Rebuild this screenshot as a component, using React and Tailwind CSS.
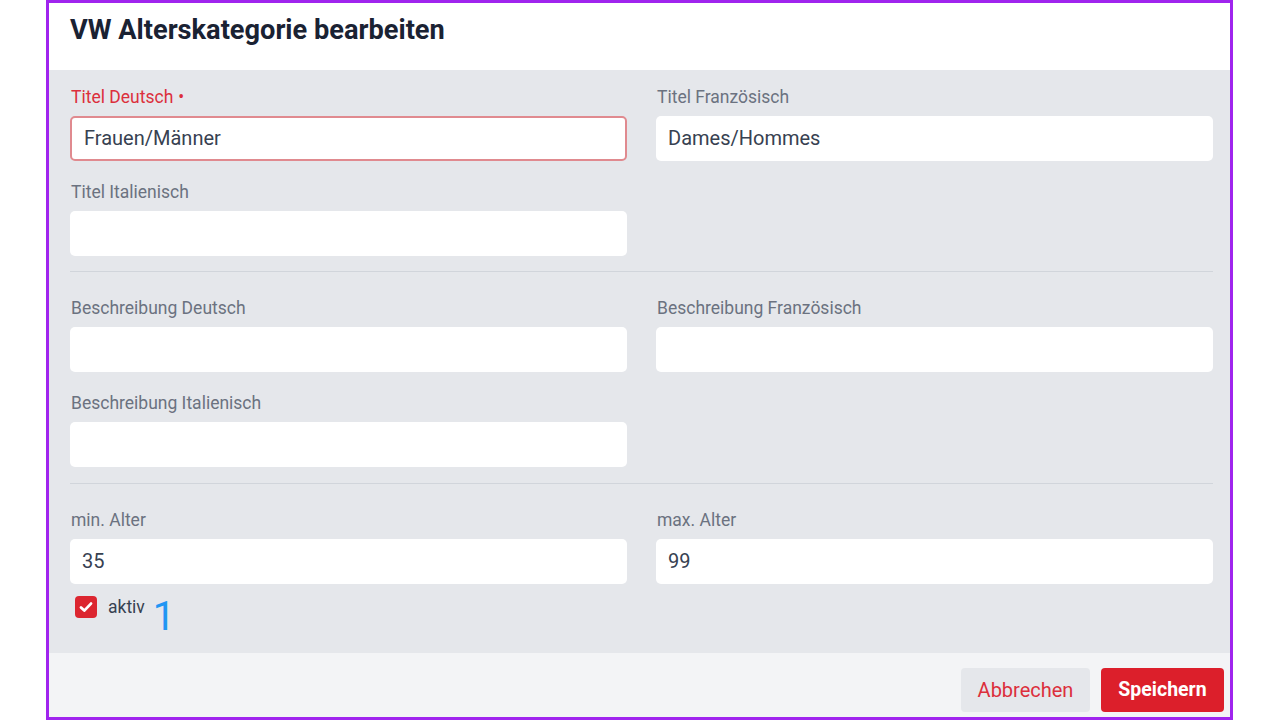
import React from "react";

const font = { fontFamily: "Roboto, 'Noto Sans', sans-serif" };

function Field({ label, value = "", required = false, invalid = false }) {
  return (
    <div className="flex flex-col">
      <label
        className={`h-[24px] leading-[24px] text-[17.5px] px-[1px] ${
          required ? "text-[#dc2f3c]" : "text-[#6b7280]"
        }`}
      >
        {label}
        {required && <span className="ml-[5px]">•</span>}
      </label>
      <div
        className={`mt-[7px] h-[45px] rounded-[5px] bg-white flex items-center px-[12px] text-[20px] text-[#374151] ${
          invalid ? "border-2 border-[#e08a8f]" : ""
        }`}
      >
        <span className="-mt-[1px]">{value}</span>
      </div>
    </div>
  );
}

export default function App() {
  return (
    <div className="w-[1280px] h-[720px] bg-white" style={font}>
      <div className="ml-[46px] w-[1187px] h-[720px] border-[3px] border-[#a024ee] flex flex-col">
        {/* header */}
        <div className="h-[67px] bg-white flex items-center pl-[21px]">
          <h1 className="text-[27.2px] font-bold text-[#1a2233] -mt-[13px]">
            VW Alterskategorie bearbeiten
          </h1>
        </div>

        {/* form body */}
        <div className="flex-1 bg-[#e5e7eb] pl-[21px] pr-[17px] pt-[15px]">
          <div className="grid grid-cols-2 gap-x-[29px] gap-y-[19px]">
            <Field label="Titel Deutsch" value="Frauen/Männer" required invalid />
            <Field label="Titel Französisch" value="Dames/Hommes" />
            <Field label="Titel Italienisch" />
          </div>
          <div className="mt-[15px] h-px bg-[#d1d5db]" />
          <div className="mt-[24px] grid grid-cols-2 gap-x-[29px] gap-y-[19px]">
            <Field label="Beschreibung Deutsch" />
            <Field label="Beschreibung Französisch" />
            <Field label="Beschreibung Italienisch" />
          </div>
          <div className="mt-[16px] h-px bg-[#d1d5db]" />
          <div className="mt-[24px] grid grid-cols-2 gap-x-[29px] gap-y-[19px]">
            <Field label="min. Alter" value="35" />
            <Field label="max. Alter" value="99" />
          </div>
          <div className="mt-[12px] flex items-center h-[22px] pl-[5px]">
            <span className="w-[22px] h-[22px] rounded-[4px] bg-[#dc2630] flex items-center justify-center">
              <svg width="16" height="16" viewBox="0 0 16 16" fill="none">
                <path
                  d="M3 8.5l3.3 3.1L13 4.6"
                  stroke="white"
                  strokeWidth="2.8"
                  strokeLinecap="round"
                  strokeLinejoin="round"
                />
              </svg>
            </span>
            <span className="ml-[11px] text-[17.5px] text-[#374151]">aktiv</span>
            <span className="ml-[8px] mt-[20px] text-[40px] leading-none font-normal text-[#2196f3]">
              1
            </span>
          </div>
        </div>

        {/* footer */}
        <div className="h-[64px] bg-[#f3f4f6] flex items-start justify-end pt-[15px] pr-[6px] gap-[11px]">
          <button className="h-[44px] w-[129px] rounded-[4px] bg-[#e5e7eb] text-[#dc2f3c] text-[20px]">
            Abbrechen
          </button>
          <button className="h-[44px] w-[123px] rounded-[4px] bg-[#dc1f2b] text-white text-[19.5px] font-bold">
            Speichern
          </button>
        </div>
      </div>
    </div>
  );
}
